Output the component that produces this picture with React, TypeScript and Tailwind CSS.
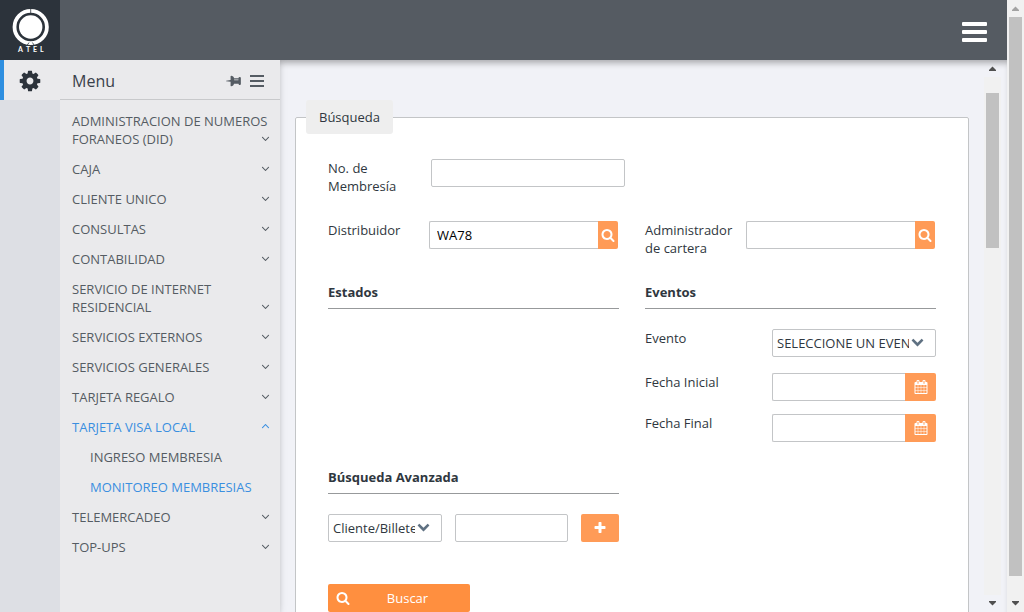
import React from "react";

const PATHS = {
  search:
    "M1216 832q0-185-131.5-316.5t-316.5-131.5-316.5 131.5-131.5 316.5 131.5 316.5 316.5 131.5 316.5-131.5 131.5-316.5zm512 832q0 52-38 90t-90 38q-54 0-90-38l-343-342q-179 124-399 124-143 0-273.5-55.5t-225-150-150-225-55.5-273.5 55.5-273.5 150-225 225-150 273.5-55.5 273.5 55.5 225 150 150 225 55.5 273.5q0 220-124 399l343 343q37 37 37 90z",
  calendar:
    "M192 1664h288v-288h-288v288zm352 0h320v-288h-320v288zm-352-352h288v-320h-288v320zm352 0h320v-320h-320v320zm-352-384h288v-288h-288v288zm736 736h320v-288h-320v288zm-384-736h320v-288h-320v288zm768 736h288v-288h-288v288zm-384-352h320v-320h-320v320zm-352-864v-288q0-13-9.5-22.5t-22.5-9.5h-64q-13 0-22.5 9.5t-9.5 22.5v288q0 13 9.5 22.5t22.5 9.5h64q13 0 22.5-9.5t9.5-22.5zm736 864h288v-320h-288v320zm-384-384h320v-288h-320v288zm384 0h288v-288h-288v288zm32-480v-288q0-13-9.5-22.5t-22.5-9.5h-64q-13 0-22.5 9.5t-9.5 22.5v288q0 13 9.5 22.5t22.5 9.5h64q13 0 22.5-9.5t9.5-22.5zm384-64v1280q0 52-38 90t-90 38h-1408q-52 0-90-38t-38-90v-1280q0-52 38-90t90-38h128v-96q0-66 47-113t113-47h64q66 0 113 47t47 113v96h384v-96q0-66 47-113t113-47h64q66 0 113 47t47 113v96h128q52 0 90 38t38 90z",
  cog: "M1152 896q0-106-75-181t-181-75-181 75-75 181 75 181 181 75 181-75 75-181zm512-109v222q0 12-8 23t-20 13l-185 28q-19 54-39 91 35 50 107 138 10 12 10 25t-9 23q-27 37-99 108t-94 71q-12 0-26-9l-138-108q-44 23-91 38-16 136-29 186-7 28-36 28h-222q-14 0-24.5-8.5t-11.5-21.5l-28-184q-49-16-90-37l-141 107q-10 9-25 9-14 0-25-11-126-114-165-168-7-10-7-23 0-12 8-23 15-21 51-66.5t54-70.5q-27-50-41-99l-183-27q-13-2-21-12.5t-8-23.5v-222q0-12 8-23t19-13l186-28q14-46 39-92-40-57-107-138-10-12-10-24 0-10 9-23 26-36 98.5-107.5t94.5-71.5q13 0 26 10l138 107q44-23 91-38 16-136 29-186 7-28 36-28h222q14 0 24.5 8.5t11.5 21.5l28 184q49 16 90 37l142-107q9-9 24-9 13 0 25 10 129 119 165 170 7 8 7 22 0 12-8 23-15 21-51 66.5t-54 70.5q26 50 41 98l183 28q13 2 21 12.5t8 23.5z",
  plus: "M1600 736v192q0 40-28 68t-68 28h-416v416q0 40-28 68t-68 28h-192q-40 0-68-28t-28-68v-416h-416q-40 0-68-28t-28-68v-192q0-40 28-68t68-28h416v-416q0-40 28-68t68-28h192q40 0 68 28t28 68v416h416q40 0 68 28t28 68z",
  chevron:
    "M1683 808l-742 741q-19 19-45 19t-45-19l-742-741q-19-19-19-45.5t19-45.5l166-165q19-19 45-19t45 19l531 531 531-531q19-19 45-19t45 19l166 165q19 19 19 45.5t-19 45.5z",
  pin: "M800 864v-448q0-14-9-23t-23-9-23 9-9 23v448q0 14 9 23t23 9 23-9 9-23zm672 352q0 26-19 45t-45 19h-429l-51 483q-2 12-10.5 20.5t-20.5 8.5h-1q-27 0-32-27l-76-485h-404q-26 0-45-19t-19-45q0-123 78.5-221.5t177.5-98.5v-512q-52 0-90-38t-38-90 38-90 90-38h640q52 0 90 38t38 90-38 90-90 38v512q99 0 177.5 98.5t78.5 221.5z",
  angle:
    "M1395 736q0 13-10 23l-466 466q-10 10-23 10t-23-10l-466-466q-10-10-10-23t10-23l50-50q10-10 23-10t23 10l393 393 393-393q10-10 23-10t23 10l50 50q10 10 10 23z",
};

function Icon({ name, className }: { name: keyof typeof PATHS; className: string }) {
  return (
    <svg viewBox="0 0 1792 1792" fill="currentColor" aria-hidden="true" className={className}>
      <path d={PATHS[name]} />
    </svg>
  );
}

function Logo() {
  return (
    <div className="h-[60px] w-[60px] shrink-0 bg-[#2c333b] text-white">
      <svg viewBox="0 0 60 60" className="h-full w-full" role="img" aria-label="ATEL">
        <circle cx="30.7" cy="27" r="16.2" fill="none" stroke="currentColor" strokeWidth="3.8" />
        <path d="M30.7 8v5M27 45.5l2-3M34.4 45.5l-2-3" stroke="#2c333b" strokeWidth="0.8" />
        <circle cx="30.7" cy="27" r="11.7" fill="currentColor" />
        <text x="18 26 33 40" y="52" fill="currentColor" className="font-['Lato'] text-[7px] font-bold">
          ATEL
        </text>
      </svg>
    </div>
  );
}

type Item = { label: string; open?: boolean; children?: { label: string; active?: boolean }[] };

const MENU: Item[] = [
  { label: "ADMINISTRACION DE NUMEROS FORANEOS (DID)" },
  { label: "CAJA" },
  { label: "CLIENTE UNICO" },
  { label: "CONSULTAS" },
  { label: "CONTABILIDAD" },
  { label: "SERVICIO DE INTERNET RESIDENCIAL" },
  { label: "SERVICIOS EXTERNOS" },
  { label: "SERVICIOS GENERALES" },
  { label: "TARJETA REGALO" },
  {
    label: "TARJETA VISA LOCAL",
    open: true,
    children: [{ label: "INGRESO MEMBRESIA" }, { label: "MONITOREO MEMBRESIAS", active: true }],
  },
  { label: "TELEMERCADEO" },
  { label: "TOP-UPS" },
];

function Sidebar() {
  return (
    <aside className="flex w-[280px] shrink-0 flex-col bg-[#eaeaec] shadow-[0_0_8px_rgba(0,0,0,0.12)]">
      <div className="flex h-10 shrink-0">
        <button aria-label="Ajustes" className="flex w-[60px] items-center justify-center border-l-4 border-[#2f8fe0] pt-0.5 pr-1 text-[#2c333b]">
          <Icon name="cog" className="h-6 w-6" />
        </button>
        <div className="flex flex-1 items-center border-b border-[#c8c9cb] pr-4 pl-3 text-[#555c63]">
          <h2 className="flex-1 pt-0.5 text-base leading-6 text-[#39414a]">Menu</h2>
          <button aria-label="Fijar menu" className="mr-2 pt-0.5">
            <Icon name="pin" className="h-4 w-4 rotate-90" />
          </button>
          <button aria-label="Contraer menu" className="flex w-[14px] flex-col gap-[3px] pt-0.5">
            <span className="h-0.5 bg-[#555c63]" />
            <span className="h-0.5 bg-[#555c63]" />
            <span className="h-0.5 bg-[#555c63]" />
          </button>
        </div>
      </div>
      <div className="flex min-h-0 flex-1">
        <div className="w-[60px] shrink-0 bg-[#dddfe4]" />
        <ul className="flex-1 pt-1.5 text-[#555c63]">
          {MENU.map((item) => (
            <li key={item.label}>
              <button
                aria-expanded={!!item.open}
                className={
                  item.open
                    ? "relative block w-full py-1.5 pr-2 pl-3 text-left text-[#3a8fe0]"
                    : "relative block w-full py-1.5 pr-2 pl-3 text-left"
                }
              >
                {item.label}
                <Icon
                  name="angle"
                  className={
                    item.open ? "absolute right-2 bottom-[9px] h-[13px] w-[13px] rotate-180" : "absolute right-2 bottom-[9px] h-[13px] w-[13px]"
                  }
                />
              </button>
              {item.children && (
                <ul>
                  {item.children.map((child) => (
                    <li key={child.label}>
                      <a
                        href="#"
                        className={
                          child.active ? "block py-1.5 pl-[30px] text-[#3a8fe0]" : "block py-1.5 pl-[30px]"
                        }
                      >
                        {child.label}
                      </a>
                    </li>
                  ))}
                </ul>
              )}
            </li>
          ))}
        </ul>
      </div>
    </aside>
  );
}

const FIELD = "h-7 w-full min-w-0 rounded-[2px] border border-[#c3c5c7] bg-white px-[7px] text-black outline-none";
const JOINED = "h-7 w-full min-w-0 rounded-l-[2px] border border-r-0 border-[#c3c5c7] bg-white px-[7px] text-black outline-none";

function LookupField({ id, label, value }: { id: string; label: string; value: string }) {
  return (
    <div className="grid grid-cols-[101px_1fr] pr-px">
      <label htmlFor={id}>{label}</label>
      <div className="flex">
        <input id={id} type="text" defaultValue={value} className={JOINED} />
        <button
          type="button"
          aria-label={"Buscar " + label}
          className="flex h-7 w-5 shrink-0 items-center justify-center rounded-r-[2px] bg-[#ff9b57] text-white"
        >
          <Icon name="search" className="h-3.5 w-3.5" />
        </button>
      </div>
    </div>
  );
}

function DateField({ id, label }: { id: string; label: string }) {
  return (
    <div className="grid grid-cols-[127px_1fr]">
      <label htmlFor={id}>{label}</label>
      <div className="flex">
        <input id={id} type="text" className={JOINED} />
        <button
          type="button"
          aria-label={"Elegir " + label}
          className="flex h-7 w-[31px] shrink-0 items-center justify-center rounded-r-[2px] bg-[#ff9b57] text-white"
        >
          <Icon name="calendar" className="h-3.5 w-3.5" />
        </button>
      </div>
    </div>
  );
}

function SelectField({ id, label, option }: { id: string; label?: string; option: string }) {
  return (
    <div className="relative">
      <select
        id={id}
        aria-label={label}
        className="h-7 w-full appearance-none rounded-[2px] border border-[#c3c5c7] bg-white pr-[26px] pl-1 text-[#2f3740] outline-none"
      >
        <option>{option}</option>
      </select>
      <Icon name="chevron" className="pointer-events-none absolute top-1.5 right-3 h-[13px] w-[13px] text-[#5f7182]" />
    </div>
  );
}

function SectionTitle({ children }: { children: React.ReactNode }) {
  return <h3 className="border-b border-[#97999b] pb-[7px] font-bold">{children}</h3>;
}

function SearchForm() {
  return (
    <form className="min-w-0 flex-1 pt-10 pr-[15px] pl-[15px]">
      <fieldset className="min-w-0 rounded-[2px] border border-[#c3c5c7] bg-white px-8 pb-10">
        <legend className="-ml-[22px] rounded-[3px] bg-[#eeeeee] px-[13px] py-2">Búsqueda</legend>

        <div className="grid grid-cols-[103px_194px] pt-[25px]">
          <label htmlFor="membresia" className="pr-4">No. de Membresía</label>
          <input id="membresia" type="text" className={FIELD} />
        </div>

        <div className="mt-[26px] grid grid-cols-2 gap-x-[26px]">
          <LookupField id="distribuidor" label="Distribuidor" value="WA78" />
          <LookupField id="administrador" label="Administrador de cartera" value="" />
        </div>

        <div className="mt-[26px] grid grid-cols-2 gap-x-[26px]">
          <section>
            <SectionTitle>Estados</SectionTitle>
          </section>
          <section>
            <SectionTitle>Eventos</SectionTitle>
            <div className="mt-5 grid grid-cols-[127px_1fr]">
              <label htmlFor="evento">Evento</label>
              <SelectField id="evento" option="SELECCIONE UN EVENTO" />
            </div>
            <div className="mt-4">
              <DateField id="fecha-inicial" label="Fecha Inicial" />
            </div>
            <div className="mt-[13px]">
              <DateField id="fecha-final" label="Fecha Final" />
            </div>
          </section>
        </div>

        <div className="mt-[26px] grid grid-cols-2 gap-x-[26px]">
          <section>
            <SectionTitle>Búsqueda Avanzada</SectionTitle>
            <div className="mt-5 grid grid-cols-[1fr_1fr_38px] gap-x-[13px]">
              <SelectField id="criterio" label="Criterio" option="Cliente/Billetera" />
              <input type="text" aria-label="Valor" className={FIELD} />
              <button
                type="button"
                aria-label="Agregar"
                className="flex h-7 items-center justify-center rounded-[2px] bg-[#ff9b57] text-white"
              >
                <Icon name="plus" className="h-3.5 w-3.5" />
              </button>
            </div>
          </section>
        </div>

        <button type="button" className="mt-[42px] flex h-7 w-[142px] items-center rounded-[2px] bg-[#ff8f3f] px-2 text-white">
          <Icon name="search" className="h-3.5 w-3.5" />
          <span className="flex-1 pl-[3px] text-center">Buscar</span>
        </button>
      </fieldset>
    </form>
  );
}

function Arrow({ down, faint }: { down?: boolean; faint?: boolean }) {
  return (
    <svg
      viewBox="0 0 17 17"
      aria-hidden="true"
      className={faint ? "h-[17px] w-[17px] shrink-0 text-[#a3a3a3]" : "h-[17px] w-[17px] shrink-0 text-[#505050]"}
    >
      <path d={down ? "M5 6h7v1l-3.5 3.5-3.5-3.5z" : "M5 11h7v-1l-3.5-3.5-3.5 3.5z"} fill="currentColor" />
    </svg>
  );
}

export default function App() {
  return (
    <div className="flex h-screen overflow-hidden bg-[#f1f2f7] font-['Open_Sans','Noto_Sans',sans-serif] text-[13px] leading-[18px] text-[#2f3740]">
      <div className="flex min-w-0 flex-1 flex-col">
        <header className="z-10 flex h-[60px] shrink-0 items-center justify-between bg-[#555b62]">
          <Logo />
          <button aria-label="Abrir opciones" className="mr-5 flex w-[25px] flex-col gap-1 pt-1">
            <span className="h-1 rounded-[1px] bg-white" />
            <span className="h-1 rounded-[1px] bg-white" />
            <span className="h-1 rounded-[1px] bg-white" />
          </button>
        </header>
        <div className="flex min-h-0 flex-1">
          <Sidebar />
          <main className="flex min-w-0 flex-1 overflow-hidden pr-1.5 shadow-[inset_0_6px_6px_-3px_rgba(0,0,0,0.3)]">
            <SearchForm />
            <div className="flex w-[17px] shrink-0 flex-col items-center" aria-hidden="true">
              <Arrow />
              <div className="flex w-[17px] flex-1 flex-col items-center bg-[#f1f1f1] pt-4">
                <div className="h-[155px] w-[13px] bg-[#c1c1c1]" />
              </div>
              <Arrow down />
            </div>
          </main>
        </div>
      </div>
      <div className="flex w-[17px] shrink-0 flex-col items-center bg-[#f1f1f1]" aria-hidden="true">
        <Arrow faint />
        <div className="flex w-[13px] flex-1 flex-col pb-[19px]">
          <div className="flex-1 bg-[#c1c1c1]" />
        </div>
        <Arrow down />
      </div>
    </div>
  );
}
